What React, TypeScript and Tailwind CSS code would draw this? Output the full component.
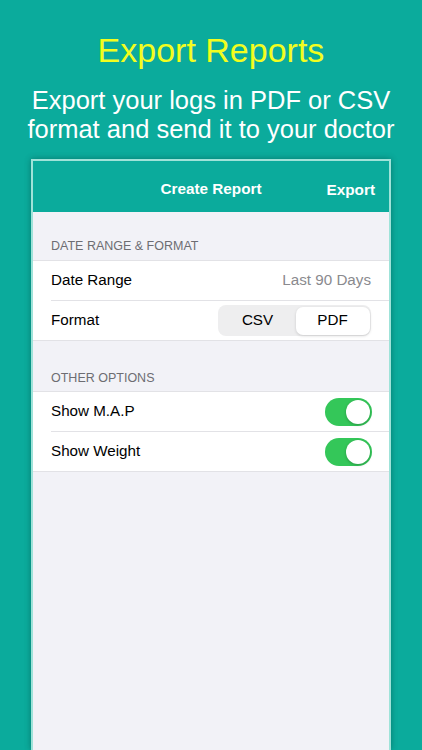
import React from "react";

const font = { fontFamily: '"Liberation Sans", Arial, sans-serif' };

function Toggle() {
  return (
    <div className="w-[47px] h-[28px] rounded-full bg-[#34c759] p-[2px] flex justify-end">
      <div className="w-[24px] h-[24px] rounded-full bg-white shadow-[0_1px_3px_rgba(0,0,0,0.25)]" />
    </div>
  );
}

export default function App() {
  return (
    <div
      className="w-[422px] h-[750px] overflow-hidden bg-[#0bab9c] flex flex-col items-center"
      style={font}
    >
      <div className="pt-[30px] text-[34px] leading-[40px] text-[#f2fd1f]">Export Reports</div>
      <div className="mt-[16px] text-[25.5px] leading-[29px] text-white text-center">
        Export your logs in PDF or CSV
        <br />
        format and send it to your doctor
      </div>
      <div className="mt-[15px] w-[360px] flex-1 border-2 border-b-0 border-[#9fe3d9] bg-[#f2f2f7] shadow-[0_0_6px_rgba(0,60,50,0.45)] flex flex-col">
        <div className="h-[51px] pt-[6px] bg-[#0bab9c] relative flex items-center justify-center text-white text-[15.3px] font-semibold">
          <span>Create Report</span>
          <span className="absolute right-[14px] top-[28.5px] -translate-y-1/2">Export</span>
        </div>
        <div className="pt-[26px] pb-[6px] pl-[18px] text-[12.5px] leading-[16px] text-[#6d6d72]">
          DATE RANGE &amp; FORMAT
        </div>
        <div className="bg-white border-y border-[#e2e2e6]">
          <div className="h-[39px] flex items-center justify-between pl-[18px] pr-[18px] text-[15.2px] text-black">
            <span>Date Range</span>
            <span className="text-[#8a8a8e]">Last 90 Days</span>
          </div>
          <div className="ml-[18px] h-px bg-[#e2e2e6]" />
          <div className="h-[39px] flex items-center justify-between pl-[18px] pr-[18px] text-[15.2px] text-black">
            <span>Format</span>
            <div className="w-[153px] h-[31px] rounded-[8px] bg-[#eeeeef] p-[1.5px] flex">
              <div className="flex-1 flex items-center justify-center">CSV</div>
              <div className="w-[74px] flex items-center justify-center rounded-[7px] bg-white shadow-[0_1px_3px_rgba(0,0,0,0.15)]">
                PDF
              </div>
            </div>
          </div>
        </div>
        <div className="pt-[29px] pb-[5px] pl-[18px] text-[12.5px] leading-[16px] text-[#6d6d72]">
          OTHER OPTIONS
        </div>
        <div className="bg-white border-y border-[#e2e2e6]">
          <div className="h-[39px] flex items-center justify-between pl-[18px] pr-[17px] text-[15.2px] text-black">
            <span>Show M.A.P</span>
            <Toggle />
          </div>
          <div className="ml-[18px] h-px bg-[#e2e2e6]" />
          <div className="h-[39px] flex items-center justify-between pl-[18px] pr-[17px] text-[15.2px] text-black">
            <span>Show Weight</span>
            <Toggle />
          </div>
        </div>
      </div>
    </div>
  );
}
